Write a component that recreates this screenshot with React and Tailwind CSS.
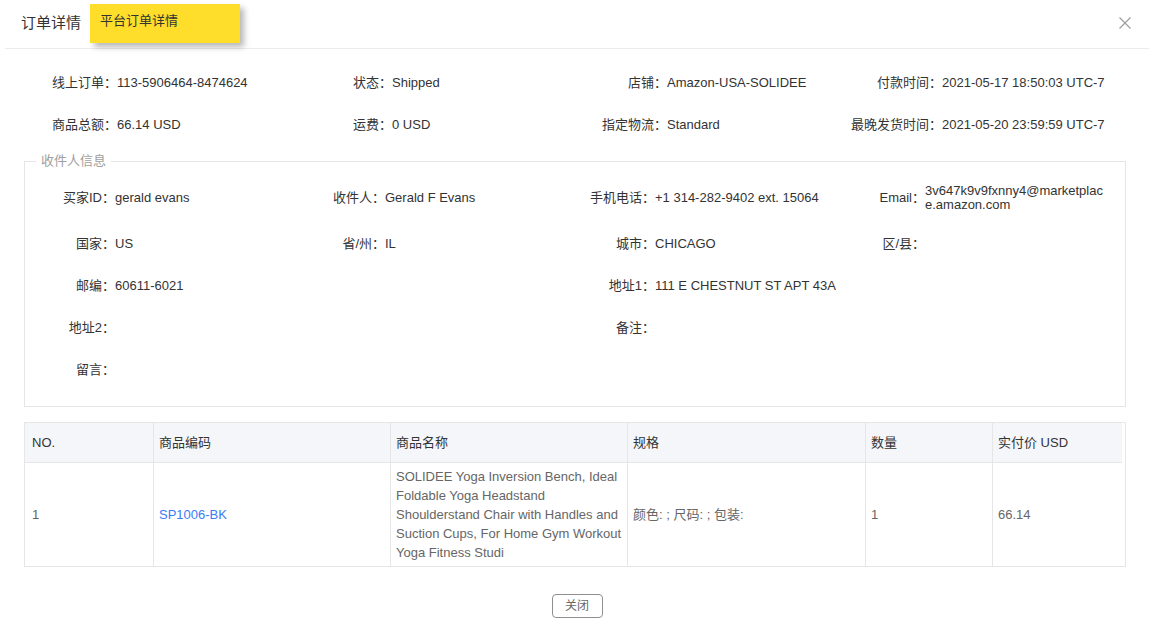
import React from "react";

const font = { fontFamily: '"Liberation Sans", "Noto Sans CJK SC", sans-serif' };

function InfoItem({ label, value, lw }) {
  return (
    <div className="flex items-center">
      <div className={`${lw} shrink-0 text-right whitespace-nowrap`}>{label}</div>
      <div className="whitespace-nowrap">{value}</div>
    </div>
  );
}

function AddrItem({ label, value, wrap }) {
  return (
    <div className="flex items-center w-[270px] shrink-0">
      <div className="w-[90px] shrink-0 text-right whitespace-nowrap">{label}</div>
      {wrap ? (
        <div className="w-[180px] break-all leading-[14px]">{value}</div>
      ) : (
        <div className="whitespace-nowrap">{value}</div>
      )}
    </div>
  );
}

export default function App() {
  const cols = [
    { t: "NO.", w: "w-[129px]", pl: "pl-[7px]" },
    { t: "商品编码", w: "w-[237px]", pl: "pl-[5px]" },
    { t: "商品名称", w: "w-[237px]", pl: "pl-[5px]" },
    { t: "规格", w: "w-[238px]", pl: "pl-[5px]" },
    { t: "数量", w: "w-[127px]", pl: "pl-[5px]" },
    { t: "实付价 USD", w: "w-[129px]", pl: "pl-[5px]" },
  ];
  return (
    <div className="w-[1154px] h-[634px] bg-white text-[#333] text-[13px] leading-[20px] overflow-hidden" style={font}>
      {/* Header */}
      <div className="relative mx-[5px] h-[49px] border-b border-[#ececec] flex items-center">
        <div className="pl-[16px] text-[15px] text-[#333] pb-[3px]">订单详情</div>
        <div className="absolute left-[85px] top-[4px] w-[150px] h-[39px] bg-[#fede2a] shadow-[4px_4px_6px_rgba(0,0,0,0.28)] pl-[10px] pt-[7px] text-[13px] text-[#333]">
          平台订单详情
        </div>
        <div className="ml-auto mr-[18px] mb-[2px]">
          <svg width="12" height="12" viewBox="0 0 12 12">
            <path d="M0.5 0.5 L11.5 11.5 M11.5 0.5 L0.5 11.5" stroke="#9a9a9a" strokeWidth="1.1" fill="none" />
          </svg>
        </div>
      </div>

      {/* Order info */}
      <div className="pl-[23px] pt-[24px] grid grid-cols-[275px_275px_275px_275px] gap-y-[22px]">
        <InfoItem lw="w-[94px]" label="线上订单：" value="113-5906464-8474624" />
        <InfoItem lw="w-[94px]" label="状态：" value="Shipped" />
        <InfoItem lw="w-[94px]" label="店铺：" value="Amazon-USA-SOLIDEE" />
        <InfoItem lw="w-[94px]" label="付款时间：" value="2021-05-17 18:50:03 UTC-7" />
        <InfoItem lw="w-[94px]" label="商品总额：" value="66.14 USD" />
        <InfoItem lw="w-[94px]" label="运费：" value="0 USD" />
        <InfoItem lw="w-[94px]" label="指定物流：" value="Standard" />
        <InfoItem lw="w-[94px]" label="最晚发货时间：" value="2021-05-20 23:59:59 UTC-7" />
      </div>

      {/* Receiver fieldset */}
      <fieldset className="ml-[24px] mr-[28px] mt-[17px] border border-[#e6e6e6] pt-[14px] pb-[26px]">
        <legend className="ml-[11px] px-[5px] text-[13px] leading-[18px] text-[#a0a0a0]">收件人信息</legend>
        <div className="flex flex-col gap-[22px]">
          <div className="flex items-center">
            <AddrItem label="买家ID：" value="gerald evans" />
            <AddrItem label="收件人：" value="Gerald F Evans" />
            <AddrItem label="手机电话：" value="+1 314-282-9402 ext. 15064" />
            <AddrItem label="Email：" value="3v647k9v9fxnny4@marketplace.amazon.com" wrap />
          </div>
          <div className="flex items-center">
            <AddrItem label="国家：" value="US" />
            <AddrItem label="省/州：" value="IL" />
            <AddrItem label="城市：" value="CHICAGO" />
            <AddrItem label="区/县：" value="" />
          </div>
          <div className="flex items-center">
            <AddrItem label="邮编：" value="60611-6021" />
            <AddrItem label="" value="" />
            <AddrItem label="地址1：" value="111 E CHESTNUT ST APT 43A" />
          </div>
          <div className="flex items-center">
            <AddrItem label="地址2：" value="" />
            <AddrItem label="" value="" />
            <AddrItem label="备注：" value="" />
          </div>
          <div className="flex items-center">
            <AddrItem label="留言：" value="" />
          </div>
        </div>
      </fieldset>

      {/* Table */}
      <div className="ml-[24px] mr-[28px] mt-[15px] border border-[#e6e6e6]">
        <div className="w-[1097px]">
          <div className="flex bg-[#f5f6fa] h-[40px] border-b border-[#e6e6e6] text-[#333]">
            {cols.map((c, i) => (
              <div
                key={c.t}
                className={`${c.w} ${c.pl} shrink-0 flex items-center ${i < cols.length - 1 ? "border-r border-[#e6e6e6]" : ""}`}
              >
                {c.t}
              </div>
            ))}
          </div>
          <div className="flex text-[#666] h-[103px]">
            <div className="w-[129px] shrink-0 pl-[7px] flex items-center border-r border-[#e6e6e6] text-[#666]">1</div>
            <div className="w-[237px] shrink-0 pl-[5px] flex items-center border-r border-[#e6e6e6] text-[#3b7bf5]">SP1006-BK</div>
            <div className="w-[237px] shrink-0 pl-[5px] pr-[4px] flex items-center border-r border-[#e6e6e6] leading-[19px]">
              SOLIDEE Yoga Inversion Bench, Ideal Foldable Yoga Headstand Shoulderstand Chair with Handles and Suction Cups, For Home Gym Workout Yoga Fitness Studi
            </div>
            <div className="w-[238px] shrink-0 pl-[5px] flex items-center border-r border-[#e6e6e6]">颜色: ; 尺码: ; 包装:</div>
            <div className="w-[127px] shrink-0 pl-[5px] flex items-center border-r border-[#e6e6e6] text-[#666]">1</div>
            <div className="w-[129px] shrink-0 pl-[5px] flex items-center">66.14</div>
          </div>
        </div>
      </div>

      {/* Footer */}
      <div className="flex justify-center mt-[27px]">
        <button className="w-[51px] h-[24px] border border-[#8f8f8f] rounded-[4px] text-[12px] text-[#666] leading-[20px] bg-white">
          关闭
        </button>
      </div>
    </div>
  );
}
